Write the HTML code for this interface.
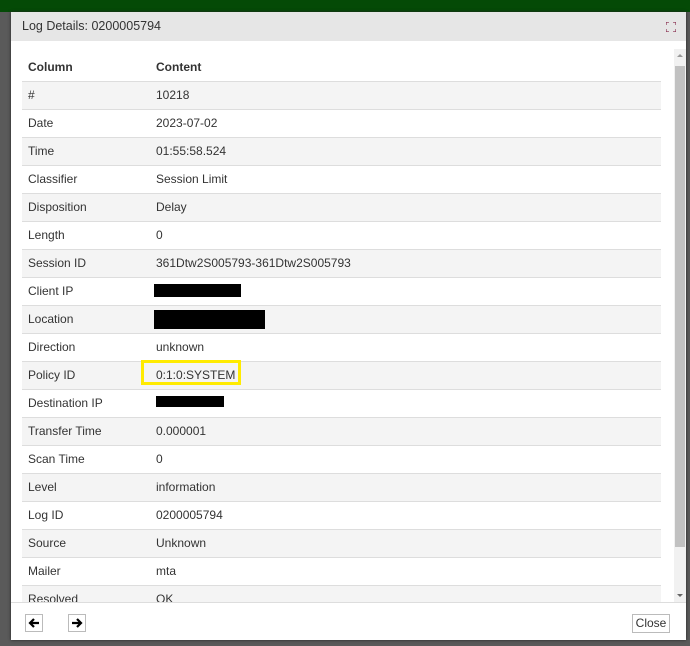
<!DOCTYPE html>
<html><head><style>
*{margin:0;padding:0;box-sizing:border-box}
body{width:690px;height:646px;overflow:hidden;background:#5a5a5a;font-family:"Liberation Sans",sans-serif;font-size:12px;color:#333;position:relative}
.top{position:absolute;left:0;top:0;width:690px;height:12px;background:#044a06}
.dlg{position:absolute;left:11px;top:12px;width:675px;height:628px;background:#fff;box-shadow:0 0 3px #222}
.hdr{height:29px;background:#e6e6e6;padding:7px 0 0 11px;font-size:12.5px;color:#333}
.tbl{position:absolute;left:11px;top:52px;width:639px}
.row{height:28px;border-top:1px solid #ddd;position:relative;line-height:27px}
.row.g{background:#f4f4f4}
.row span{position:absolute;left:6px}
.row span+span{left:134px}
.th{height:28px;font-weight:bold;line-height:28px;position:relative}
.th span{position:absolute;left:6px}.th span+span{left:134px}
.b{position:absolute;background:#000}
.sb{position:absolute;left:663px;top:37px;width:12px;height:553px;background:#f1f1f1}
.foot{position:absolute;left:0;top:590px;width:675px;height:38px;border-top:1px solid #ddd;background:#fff}
.btn{position:absolute;top:11px;height:18px;border:1px solid #bbb;background:#fff;font-size:12px;text-align:center;line-height:16px}
</style></head><body>
<div class="top"></div>
<div class="dlg">
<div class="hdr">Log Details: 0200005794</div>
<svg style="position:absolute;left:655px;top:10px" width="10" height="10"><path d="M0 3V0H3M7 0H10V3M10 7V10H7M3 10H0V7" fill="none" stroke="#8a3050" stroke-width="1.2"/></svg>
<div style="position:absolute;left:0;top:29px;width:675px;height:561px;overflow:hidden">
<div class="tbl" style="top:12px">
<div class="th"><span>Column</span><span>Content</span></div>
<div class="row g"><span>#</span><span>10218</span></div>
<div class="row"><span>Date</span><span>2023-07-02</span></div>
<div class="row g"><span>Time</span><span>01:55:58.524</span></div>
<div class="row"><span>Classifier</span><span>Session Limit</span></div>
<div class="row g"><span>Disposition</span><span>Delay</span></div>
<div class="row"><span>Length</span><span>0</span></div>
<div class="row g"><span>Session ID</span><span>361Dtw2S005793-361Dtw2S005793</span></div>
<div class="row"><span>Client IP</span></div>
<div class="row g"><span>Location</span></div>
<div class="row"><span>Direction</span><span>unknown</span></div>
<div class="row g"><span>Policy ID</span><span>0:1:0:SYSTEM</span></div>
<div class="row"><span>Destination IP</span></div>
<div class="row g"><span>Transfer Time</span><span>0.000001</span></div>
<div class="row"><span>Scan Time</span><span>0</span></div>
<div class="row g"><span>Level</span><span>information</span></div>
<div class="row"><span>Log ID</span><span>0200005794</span></div>
<div class="row g"><span>Source</span><span>Unknown</span></div>
<div class="row"><span>Mailer</span><span>mta</span></div>
<div class="row g"><span>Resolved</span><span>OK</span></div>
</div>
</div>
<div class="b" style="left:143px;top:272px;width:87px;height:13px"></div>
<div class="b" style="left:143px;top:298px;width:111px;height:19px"></div>
<div class="b" style="left:145px;top:384px;width:68px;height:11px"></div>
<div style="position:absolute;left:130px;top:348px;width:100px;height:25px;border:3px solid #ffeb00"></div>
<div class="sb"><div style="position:absolute;left:1px;top:17px;width:10px;height:481px;background:#c1c1c1"></div>
<div style="position:absolute;left:3px;top:5px;border:3px solid transparent;border-bottom-color:#999;border-top:0"></div>
<div style="position:absolute;left:3px;top:545px;border:3px solid transparent;border-top-color:#666;border-bottom:0"></div></div>
<div class="foot">
<div class="btn" style="left:14px;width:18px"><svg width="12" height="12" style="margin-top:2px"><path d="M11 6H2M6 2L2 6L6 10" fill="none" stroke="#000" stroke-width="2.2"/></svg></div>
<div class="btn" style="left:57px;width:18px"><svg width="12" height="12" style="margin-top:2px"><path d="M1 6H10M6 2L10 6L6 10" fill="none" stroke="#000" stroke-width="2.2"/></svg></div>
<div class="btn" style="left:621px;width:38px;height:19px">Close</div>
</div>
</div>
</body></html>
